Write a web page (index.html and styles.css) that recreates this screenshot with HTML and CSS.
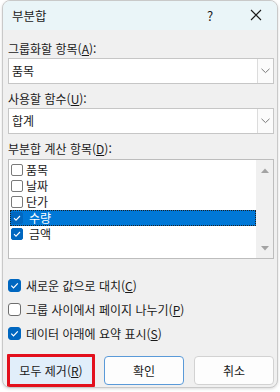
FILE: index.html
```html
<!DOCTYPE html>
<html lang="ko">
<head>
<meta charset="utf-8">
<link rel="stylesheet" href="styles.css">
</head>
<body>
<div class="dialog">
  <div class="titlebar">
    <span class="title">부분합</span>
    <span class="help">?</span>
    <span class="close"><svg width="12" height="12" viewBox="0 0 12 12"><path d="M1 1 L11 11 M11 1 L1 11" stroke="#1a1a1a" stroke-width="1.1" fill="none"/></svg></span>
  </div>
  <div class="content">
    <div class="label">그룹화할 항목(<u>A</u>):</div>
    <div class="combo">
      <span class="combo-text">품목</span>
      <span class="combo-btn"><svg width="9" height="6" viewBox="0 0 9 6"><polyline points="0.5,0.8 4.5,4.6 8.5,0.8" stroke="#7a7a7a" stroke-width="1" fill="none"/></svg></span>
    </div>
    <div class="label">사용할 함수(<u>U</u>):</div>
    <div class="combo">
      <span class="combo-text">합계</span>
      <span class="combo-btn"><svg width="9" height="6" viewBox="0 0 9 6"><polyline points="0.5,0.8 4.5,4.6 8.5,0.8" stroke="#7a7a7a" stroke-width="1" fill="none"/></svg></span>
    </div>
    <div class="label">부분합 계산 항목(<u>D</u>):</div>
    <div class="listbox">
      <div class="items">
        <div class="lb-row"><span class="lb-box"></span><span class="lb-label">품목</span></div>
        <div class="lb-row"><span class="lb-box"></span><span class="lb-label">날짜</span></div>
        <div class="lb-row"><span class="lb-box"></span><span class="lb-label">단가</span></div>
        <div class="lb-row checked selected"><span class="lb-box on"><svg width="12" height="12" viewBox="0 0 12 12"><polyline points="3,6.2 5,8.2 9,4" stroke="#fff" stroke-width="1.1" fill="none"/></svg></span><span class="lb-label">수량</span></div>
        <div class="lb-row checked"><span class="lb-box on"><svg width="12" height="12" viewBox="0 0 12 12"><polyline points="3,6.2 5,8.2 9,4" stroke="#fff" stroke-width="1.1" fill="none"/></svg></span><span class="lb-label">금액</span></div>
      </div>
      <div class="scrollbar">
        <svg width="8" height="5" viewBox="0 0 8 5"><polygon points="0,5 4,0.5 8,5" fill="#a3a3a3"/></svg>
        <svg width="8" height="5" viewBox="0 0 8 5"><polygon points="0,0 8,0 4,4.5" fill="#a3a3a3"/></svg>
      </div>
    </div>
    <div class="options">
      <div class="opt"><span class="cb on"><svg width="13" height="13" viewBox="0 0 13 13"><polyline points="3.3,6.7 5.5,8.9 9.8,4.4" stroke="#fff" stroke-width="1.2" fill="none"/></svg></span><span>새로운 값으로 대치(<u>C</u>)</span></div>
      <div class="opt"><span class="cb"></span><span>그룹 사이에서 페이지 나누기(<u>P</u>)</span></div>
      <div class="opt"><span class="cb on"><svg width="13" height="13" viewBox="0 0 13 13"><polyline points="3.3,6.7 5.5,8.9 9.8,4.4" stroke="#fff" stroke-width="1.2" fill="none"/></svg></span><span>데이터 아래에 요약 표시(<u>S</u>)</span></div>
    </div>
    <div class="buttons">
      <button class="btn btn-remove">모두 제거(<u>R</u>)</button>
      <button class="btn btn-ok">확인</button>
      <button class="btn btn-cancel">취소</button>
    </div>
  </div>
</div>
</body>
</html>
```

FILE: styles.css
```css
* { box-sizing: border-box; }
html, body {
  margin: 0;
  padding: 0;
  width: 280px;
  height: 392px;
  background: #ffffff;
  overflow: hidden;
  font-family: "Noto Sans CJK KR", "Noto Sans", sans-serif;
  font-size: 12px;
  color: #1a1a1a;
}
u { text-underline-offset: 1px; }
.dialog {
  margin-left: 2px;
  width: 276px;
  height: 388px;
  border: 1px solid #c9c9c9;
  border-radius: 8px;
  overflow: hidden;
  background: #f0f0f0;
  box-shadow: 0 1px 3px rgba(0,0,0,0.15);
  display: flex;
  flex-direction: column;
}
.titlebar {
  height: 29px;
  background: #eaf5f8;
  display: flex;
  align-items: center;
  padding: 0 3px 1px 9px;
  flex: none;
}
.title { flex: 1; font-size: 12.5px; }
.help { width: 40px; text-align: center; margin-right: 8px; font-size: 13px; }
.close { width: 36px; display: flex; justify-content: center; align-items: center; }
.content {
  padding: 0 3px 0 5px;
  display: flex;
  flex-direction: column;
}
.label {
  height: 18px;
  line-height: 18px;
  margin-top: 6px;
  white-space: nowrap;
}
.content > .label:first-child { margin-top: 10px; }
.combo {
  height: 26px;
  background: #fff;
  border: 1px solid #c6c6c6;
  display: flex;
  align-items: stretch;
}
.combo-text {
  flex: 1;
  padding-left: 3px;
  line-height: 24px;
}
.combo-btn {
  width: 16px;
  border-left: 1px solid #dcdcdc;
  background: #fbfbfb;
  display: flex;
  align-items: center;
  justify-content: center;
}
.listbox {
  margin-top: 1px;
  height: 100px;
  background: #fff;
  border: 1px solid #bdbdbd;
  display: flex;
}
.items {
  flex: 1;
  padding: 2px 0 0 1px;
}
.lb-row {
  height: 16px;
  display: flex;
  align-items: center;
  padding-left: 1px;
  white-space: nowrap;
}
.lb-box {
  width: 12px;
  height: 12px;
  border: 1px solid #7a7a7a;
  border-radius: 2px;
  background: #fff;
  flex: none;
  display: flex;
}
.lb-box.on { background: #0067c0; border-color: #0067c0; }
.lb-box svg { margin: -1px; }
.lb-label { margin-left: 3px; line-height: 16px; }
.lb-row.checked .lb-label { margin-left: 6px; }
.lb-row.selected {
  background: #0078d7;
  color: #fff;
  outline: 1px dotted #202020;
  outline-offset: -1px;
}
.scrollbar {
  width: 17px;
  background: #f0f0f0;
  display: flex;
  flex-direction: column;
  align-items: center;
  justify-content: space-between;
  padding: 8px 0 7px;
}
.options {
  margin-top: 14px;
  display: flex;
  flex-direction: column;
}
.opt {
  height: 24px;
  display: flex;
  align-items: center;
  white-space: nowrap;
}
.cb {
  width: 13px;
  height: 13px;
  border: 1px solid #6e6e6e;
  border-radius: 3px;
  background: #fff;
  margin-right: 5px;
  flex: none;
  display: flex;
}
.cb.on { background: #0067c0; border-color: #0067c0; }
.cb svg { margin: -1px; }
.buttons {
  margin-top: 9px;
  display: flex;
  align-items: center;
  height: 33px;
}
.btn {
  font-family: "Noto Sans CJK KR", "Noto Sans", sans-serif;
  font-size: 12px;
  color: #1a1a1a;
  padding: 0;
  margin: 0;
}
.btn-remove {
  width: 88px;
  height: 33px;
  margin-left: -1px;
  border: 3px solid #e3101c;
  background: #e1eefa;
  border-radius: 1px;
}
.btn-ok {
  width: 80px;
  height: 29px;
  margin-left: 9px;
  border: 1px solid #5a9ad8;
  background: #fdfdfd;
  border-radius: 4px;
}
.btn-cancel {
  width: 80px;
  height: 29px;
  margin-left: 10px;
  border: 1px solid #d2d2d2;
  background: #fdfdfd;
  border-radius: 4px;
}
```
